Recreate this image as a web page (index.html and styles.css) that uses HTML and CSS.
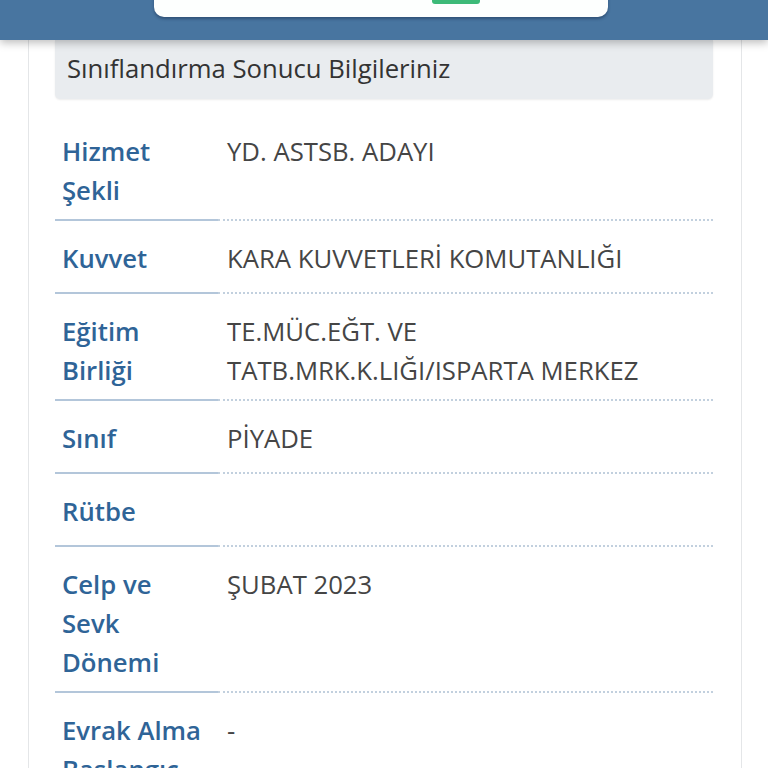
FILE: index.html
```html
<!DOCTYPE html>
<html lang="tr">
<head>
<meta charset="utf-8">
<title>Sınıflandırma Sonucu</title>
<link rel="stylesheet" href="styles.css">
</head>
<body>
<div class="topbar">
  <div class="modal">
    <span class="modal-btn"></span>
  </div>
</div>
<main class="card">
  <div class="card-head">Sınıflandırma Sonucu Bilgileriniz</div>
  <div class="info">
    <div class="row"><div class="label">Hizmet Şekli</div><div class="value">YD. ASTSB. ADAYI</div></div>
    <div class="row"><div class="label">Kuvvet</div><div class="value">KARA KUVVETLERİ KOMUTANLIĞI</div></div>
    <div class="row"><div class="label">Eğitim Birliği</div><div class="value">TE.MÜC.EĞT. VE TATB.MRK.K.LIĞI/ISPARTA MERKEZ</div></div>
    <div class="row"><div class="label">Sınıf</div><div class="value">PİYADE</div></div>
    <div class="row"><div class="label">Rütbe</div><div class="value"></div></div>
    <div class="row"><div class="label">Celp ve Sevk Dönemi</div><div class="value">ŞUBAT 2023</div></div>
    <div class="row"><div class="label">Evrak Alma Başlangıç Tarihi</div><div class="value">-</div></div>
    <div class="row"><div class="label">Evrak Alma Bitiş Tarihi</div><div class="value">-</div></div>
  </div>
</main>
</body>
</html>
```

FILE: styles.css
```css
html, body {
  margin: 0;
  padding: 0;
  background: #ffffff;
  font-family: "Open Sans", "Noto Sans", sans-serif;
  height: 768px;
  overflow: hidden;
}

.topbar {
  position: relative;
  z-index: 2;
  height: 40px;
  background: #4875a0;
  box-shadow: 0 3px 8px rgba(0, 0, 0, 0.25);
}

.modal {
  position: absolute;
  left: 154px;
  top: -30px;
  width: 454px;
  height: 47px;
  background: #fdfffe;
  border-radius: 10px;
  box-shadow: 0 2px 3px rgba(20, 40, 70, 0.45);
}

.modal-btn {
  position: absolute;
  left: 278px;
  bottom: 13px;
  width: 48px;
  height: 20px;
  background: #3dba78;
  border-radius: 3px;
}

.card {
  margin-left: 28px;
  width: 714px;
  box-sizing: border-box;
  border-left: 1px solid #e4e6e8;
  border-right: 1px solid #e4e6e8;
  padding: 0 28px 0 26px;
  min-height: 728px;
}

.card-head {
  background: #e9ecef;
  height: 59px;
  box-sizing: border-box;
  padding: 0 12px 3px;
  display: flex;
  align-items: center;
  font-size: 25.7px;
  color: #333333;
  border-radius: 0 0 5px 5px;
  box-shadow: 0 1px 2px rgba(0, 0, 0, 0.08);
}

.info {
  margin-top: 15px;
}

.row {
  display: grid;
  grid-template-columns: 163px 1fr;
}

.label,
.value {
  box-sizing: border-box;
  min-height: 73px;
  font-size: 25.7px;
  line-height: 39px;
  padding: 18px 13px 9px 7px;
}

.label {
  color: #2f6497;
  font-weight: 600;
  border-bottom: 2px solid #b3c6da;
}

.value {
  color: #454545;
  padding-left: 9px;
  padding-right: 6px;
  border-bottom: 2px dotted #c2d0de;
}
```
